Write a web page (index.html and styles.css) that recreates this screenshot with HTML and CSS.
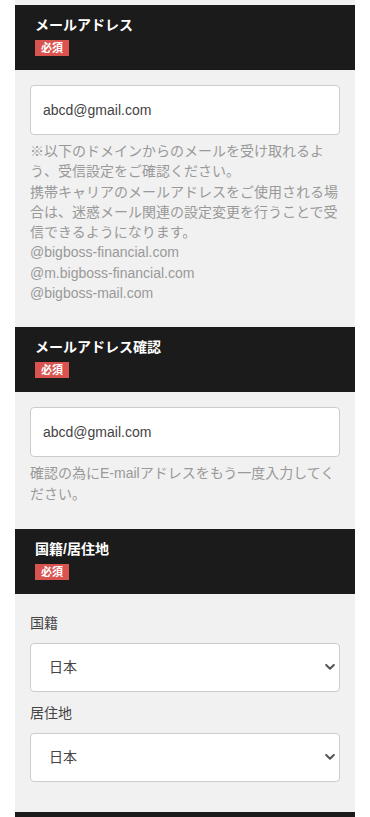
FILE: index.html
```html
<!DOCTYPE html>
<html lang="ja">
<head>
    <meta charset="UTF-8">
    <meta name="viewport" content="width=device-width, initial-scale=1.0">
    <title>お客様情報</title>
    <link rel="stylesheet" href="styles.css">
</head>
<body>
    <form class="entry-form">
        <div class="section">
            <div class="section-head">
                <span class="section-title">メールアドレス</span>
                <span class="required">必須</span>
            </div>
            <div class="section-body">
                <input type="text" class="text-input" value="abcd@gmail.com">
                <p class="note">※以下のドメインからのメールを受け取れるよう、受信設定をご確認ください。<br>携帯キャリアのメールアドレスをご使用される場合は、迷惑メール関連の設定変更を行うことで受信できるようになります。<br>@bigboss-financial.com<br>@m.bigboss-financial.com<br>@bigboss-mail.com</p>
            </div>
        </div>

        <div class="section">
            <div class="section-head">
                <span class="section-title">メールアドレス確認</span>
                <span class="required">必須</span>
            </div>
            <div class="section-body confirm-body">
                <input type="text" class="text-input" value="abcd@gmail.com">
                <p class="note">確認の為にE-mailアドレスをもう一度入力してください。</p>
            </div>
        </div>

        <div class="section">
            <div class="section-head">
                <span class="section-title">国籍/居住地</span>
                <span class="required">必須</span>
            </div>
            <div class="section-body select-body">
                <div class="field">
                    <label class="field-label">国籍</label>
                    <div class="select-wrap">
                        <select class="select-input">
                            <option selected>日本</option>
                        </select>
                        <svg class="chevron" width="10" height="6" viewBox="0 0 10 6" fill="none" stroke="currentColor" stroke-width="2" stroke-linecap="round" stroke-linejoin="round">
                            <polyline points="1.2 1 5 4.8 8.8 1"></polyline>
                        </svg>
                    </div>
                </div>
                <div class="field">
                    <label class="field-label">居住地</label>
                    <div class="select-wrap">
                        <select class="select-input">
                            <option selected>日本</option>
                        </select>
                        <svg class="chevron" width="10" height="6" viewBox="0 0 10 6" fill="none" stroke="currentColor" stroke-width="2" stroke-linecap="round" stroke-linejoin="round">
                            <polyline points="1.2 1 5 4.8 8.8 1"></polyline>
                        </svg>
                    </div>
                </div>
            </div>
        </div>

        <div class="section">
            <div class="section-head"></div>
        </div>
    </form>
</body>
</html>
```

FILE: styles.css
```css
* {
    margin: 0;
    padding: 0;
    box-sizing: border-box;
    font-family: 'Liberation Sans', 'Noto Sans CJK JP', sans-serif;
}

body {
    background-color: #fff;
    color: #333;
}

.entry-form {
    margin: 0 15px;
    padding-top: 5px;
    background-color: #f1f1f1;
}

.section-head {
    display: flex;
    flex-direction: column;
    align-items: flex-start;
    min-height: 65px;
    padding: 10px 20px 14px;
    background-color: #1b1b1b;
}

.section-title {
    font-size: 14px;
    font-weight: 700;
    line-height: 20px;
    color: #fff;
}

.required {
    margin-top: 5px;
    padding: 0 6px;
    font-size: 11px;
    font-weight: 700;
    line-height: 16px;
    color: #fff;
    background-color: #d9534f;
}

.section-body {
    padding: 15px 15px 24px;
}

.confirm-body {
    padding-bottom: 25px;
}

.text-input {
    display: block;
    width: 100%;
    height: 50px;
    padding: 0 12px;
    font-size: 14px;
    color: #444;
    background-color: #fff;
    border: 1px solid #ccc;
    border-radius: 4px;
    outline: none;
}

.note {
    margin-top: 6px;
    font-size: 14px;
    line-height: 1.45;
    color: #999;
}

.select-body {
    padding-bottom: 30px;
}

.field + .field {
    margin-top: 7px;
}

.field-label {
    display: block;
    padding-top: 4px;
    margin-bottom: 10px;
    font-size: 14px;
    line-height: 20px;
    color: #444;
}

.select-wrap {
    position: relative;
}

.select-input {
    display: block;
    width: 100%;
    height: 49px;
    padding: 0 18px;
    font-size: 14px;
    color: #444;
    background-color: #fff;
    border: 1px solid #ccc;
    border-radius: 4px;
    outline: none;
    appearance: none;
    -webkit-appearance: none;
}

.chevron {
    position: absolute;
    right: 5px;
    top: 50%;
    transform: translateY(-50%);
    color: #555;
    pointer-events: none;
}
```
